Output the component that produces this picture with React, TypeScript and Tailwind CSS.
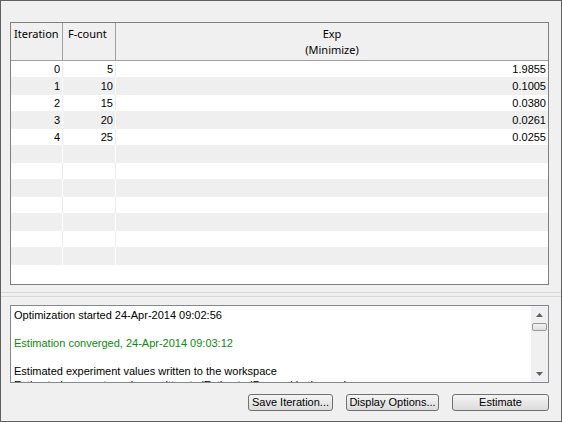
const rows = [
  { it: '0', fc: '5', exp: '1.9855' },
  { it: '1', fc: '10', exp: '0.1005' },
  { it: '2', fc: '15', exp: '0.0380' },
  { it: '3', fc: '20', exp: '0.0261' },
  { it: '4', fc: '25', exp: '0.0255' },
]

const emptyRows = 7

function Row({ idx, it, fc, exp }: { idx: number; it?: string; fc?: string; exp?: string }) {
  const odd = idx % 2 === 1
  const bg = odd ? 'bg-[#efefef] h-[18px]' : 'bg-white h-[16px]'
  const sep = odd ? 'border-white' : 'border-[#ececec]'
  return (
    <div className={`flex text-[11px] leading-none text-black ${bg}`}>
      <div className={`w-[52px] border-r ${sep} flex items-center justify-end pr-[2px]`}>{it}</div>
      <div className={`w-[53px] border-r ${sep} flex items-center justify-end pr-[2px]`}>{fc}</div>
      <div className="flex-1 flex items-center justify-end pr-[2px]">{exp}</div>
    </div>
  )
}

function Button({ label, w }: { label: string; w: string }) {
  return (
    <button
      className={`${w} h-[17px] rounded-[3px] border border-[#707070] bg-gradient-to-b from-[#f4f4f4] to-[#dcdcdc] text-[11px] leading-none text-black flex items-center justify-center whitespace-nowrap`}
    >
      {label}
    </button>
  )
}

export default function App() {
  return (
    <div
      className="w-[562px] h-[422px] border border-[#5f5f5f] bg-[#f0f0f0] flex flex-col px-[9px] pt-[21px]"
      style={{ fontFamily: '"Liberation Sans", Arial, sans-serif' }}
    >
      {/* results table */}
      <div className="w-[539px] h-[263px] border border-[#7f7f7f] bg-white flex flex-col">
        <div
          className="h-[38px] bg-[#f0f0f0] border-b border-[#a0a0a0] flex text-[11px] leading-[16px] text-black shrink-0"
          style={{ fontFamily: '"Noto Sans", "Open Sans", sans-serif' }}
        >
          <div className="w-[52px] border-r border-[#a0a0a0] pl-[3px] pt-[3px] whitespace-nowrap">Iteration</div>
          <div className="w-[53px] border-r border-[#a0a0a0] pl-[5px] pt-[3px] whitespace-nowrap">F-count</div>
          <div className="flex-1 flex flex-col items-center pt-[3px]">
            <span>Exp</span>
            <span>(Minimize)</span>
          </div>
        </div>
        {rows.map((r, i) => (
          <Row key={i} idx={i} it={r.it} fc={r.fc} exp={r.exp} />
        ))}
        {Array.from({ length: emptyRows }).map((_, i) => (
          <Row key={`e${i}`} idx={i + rows.length} />
        ))}
        <div className="flex-1 bg-white" />
      </div>

      {/* splitter */}
      <div className="-mx-[9px] mt-[7px] h-[5px] border-t border-b border-[#d8d8d8]" />

      {/* log */}
      <div className="mt-[8px] w-[539px] h-[78px] border border-[#828790] bg-white flex overflow-hidden">
        <div className="flex-1 pl-[3px] pt-[2px] text-[11px] leading-[14px] text-black overflow-hidden">
          <div>Optimization started 24-Apr-2014 09:02:56</div>
          <div>&nbsp;</div>
          <div className="text-[#0a8a0a]">Estimation converged, 24-Apr-2014 09:03:12</div>
          <div>&nbsp;</div>
          <div>Estimated experiment values written to the workspace</div>
          <div className="whitespace-nowrap">Estimated parameter values written to 'EstimatedParams' in the workspace</div>
        </div>
        <div className="w-[17px] bg-[#f0f0f0] flex flex-col items-center">
          <svg width="7" height="4" viewBox="0 0 7 4" className="mt-[7px]">
            <path d="M0 4 L3.5 0 L7 4 Z" fill="#606060" />
          </svg>
          <div className="mt-[6px] w-[15px] h-[8px] rounded-[2px] border border-[#979797] bg-gradient-to-b from-[#f3f3f3] to-[#dedede]" />
          <div className="flex-1" />
          <svg width="7" height="4" viewBox="0 0 7 4" className="mb-[6px]">
            <path d="M0 0 L7 0 L3.5 4 Z" fill="#606060" />
          </svg>
        </div>
      </div>

      {/* buttons */}
      <div className="mt-[11px] w-[539px] flex justify-end gap-[13px]">
        <Button label="Save Iteration..." w="w-[85px]" />
        <Button label="Display Options..." w="w-[93px]" />
        <Button label="Estimate" w="w-[97px]" />
      </div>
    </div>
  )
}
